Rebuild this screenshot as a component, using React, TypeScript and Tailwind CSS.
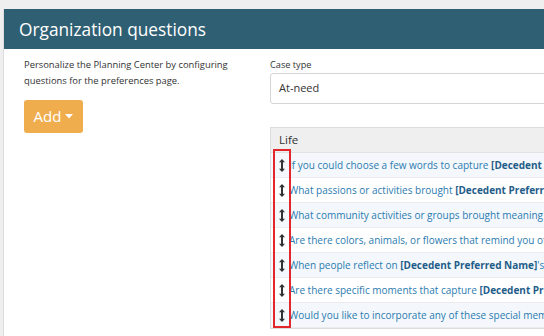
import React from "react";

const rows: { pre: string; bold?: string; post?: string }[] = [
  { pre: "If you could choose a few words to capture ", bold: "[Decedent Preferred Name]", post: "'s life, what would they be?" },
  { pre: "What passions or activities brought ", bold: "[Decedent Preferred Name]", post: " the most joy?" },
  { pre: "What community activities or groups brought meaning to their life?" },
  { pre: "Are there colors, animals, or flowers that remind you of them?" },
  { pre: "When people reflect on ", bold: "[Decedent Preferred Name]", post: "'s life, what do you hope they remember?" },
  { pre: "Are there specific moments that capture ", bold: "[Decedent Preferred Name]", post: "'s spirit?" },
  { pre: "Would you like to incorporate any of these special memories?" },
];

function ArrowsV() {
  return (
    <svg width="6" height="13" viewBox="0 0 6 13" className="shrink-0">
      <path d="M0 3.2 L3 0 L6 3.2 Z" fill="#333" />
      <path d="M0 9.8 L3 13 L6 9.8 Z" fill="#333" />
      <rect x="2" y="2.5" width="2" height="8" fill="#333" />
    </svg>
  );
}

export default function App() {
  return (
    <div
      className="w-[544px] h-[336px] overflow-hidden bg-[#efefef] pt-[9px] pl-[3px]"
      style={{ fontFamily: '"Open Sans", "Noto Sans", sans-serif' }}
    >
      <div className="w-[600px] h-[400px] bg-white border-l border-[#dcdcdc]">
        <div className="h-[40px] bg-[#2f5f73] flex items-center pl-[15px]">
          <span className="text-white text-[17.3px] leading-none pt-[1px]">Organization questions</span>
        </div>
        <div className="flex">
          <div className="w-[266px] pl-[20px] pt-[8px] shrink-0">
            <p className="text-[9.4px] leading-[16px] text-[#333]">
              Personalize the Planning Center by configuring
              <br />
              questions for the preferences page.
            </p>
            <button className="mt-[11px] w-[59px] h-[33px] rounded-[3px] bg-[#f0ad4e] text-white text-[15px] flex items-center justify-center gap-[4px]">
              <span>Add</span>
              <svg width="8" height="5" viewBox="0 0 8 5">
                <path d="M0 0 L8 0 L4 4.5 Z" fill="#fff" />
              </svg>
            </button>
          </div>
          <div className="flex-1 pt-[8px]">
            <div className="text-[9.2px] leading-[16px] text-[#333]">Case type</div>
            <div className="h-[31px] rounded-[3px] border border-[#d4d4d4] flex items-center pl-[8px] text-[11px] text-[#333]">
              At-need
            </div>
            <div className="relative mt-[23px] border border-[#dcdcdc]">
              <div className="h-[25px] bg-[#efefef] flex items-center pl-[8px] text-[11.5px] text-[#333] border-b border-[#e2e2e2]">
                Life
              </div>
              {rows.map((r, i) => (
                <div
                  key={i}
                  className={`h-[25px] flex items-center pl-[8px] gap-[4px] border-b border-[#ececec] whitespace-nowrap text-[10px] text-[#2b7bb0] ${
                    i % 2 === 0 ? "bg-[#f4f8fc]" : "bg-white"
                  }`}
                >
                  <ArrowsV />
                  <span>
                    {r.pre}
                    {r.bold && <b className="font-bold text-[#1f5d89]">{r.bold}</b>}
                    {r.post}
                  </span>
                </div>
              ))}
              <div className="absolute left-[2px] top-[21px] w-[18px] h-[179px] border-2 border-[#e3262b]" />
            </div>
          </div>
        </div>
      </div>
    </div>
  );
}
